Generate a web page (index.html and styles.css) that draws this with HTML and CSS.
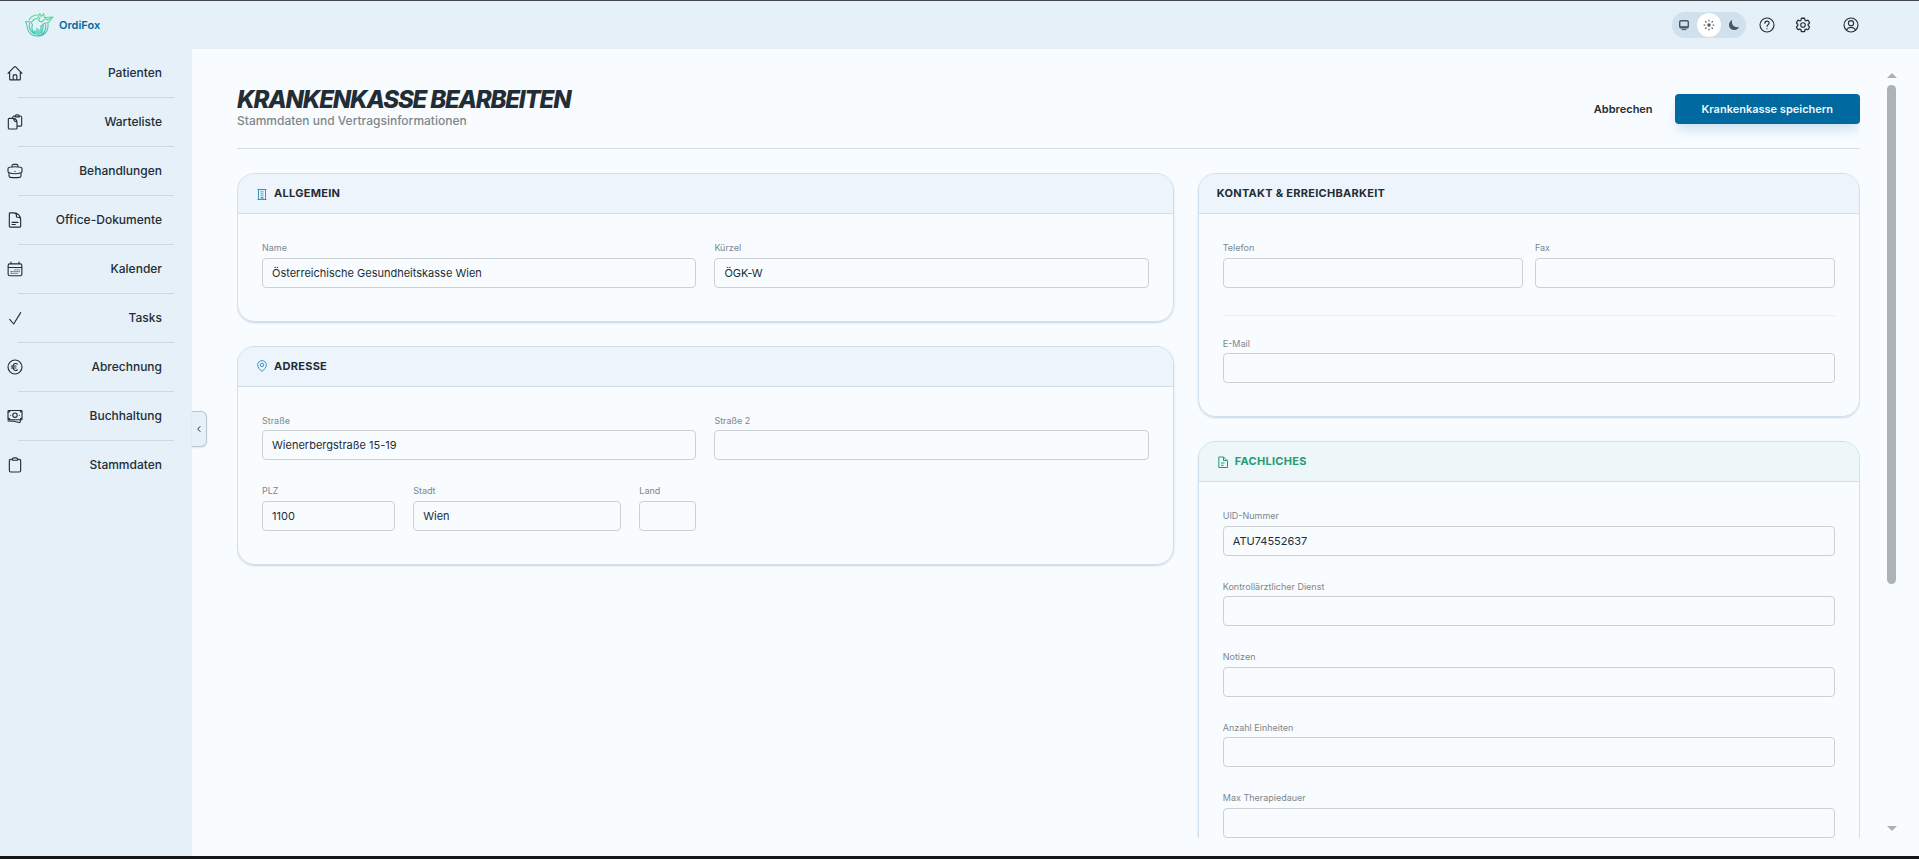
FILE: index.html
```html
<!DOCTYPE html>
<html lang="de">
<head>
<meta charset="utf-8">
<meta name="viewport" content="width=device-width, initial-scale=1">
<title>OrdiFox – Krankenkasse bearbeiten</title>
<link rel="stylesheet" href="styles.css">
</head>
<body>
<header class="topbar">
  <a class="brand" href="#">
    <svg class="brand-logo" viewBox="0 0 30 26" fill="none" stroke="url(#foxGradient)" stroke-width="1.1" stroke-linecap="round" stroke-linejoin="round" aria-hidden="true">
      <defs><linearGradient id="foxGradient" x1="0" y1="0" x2="0" y2="26" gradientUnits="userSpaceOnUse"><stop offset="0" stop-color="#5fe08f"/><stop offset="1" stop-color="#2fbfb4"/></linearGradient></defs>
      <path d="M1.500 9.500l5.500.500 1.500 3M1.500 9.500c1 2 1.500 3.500 1.800 6 .600 5 4.500 8.500 9.700 8.500 3 0 5-1 6.500-2.800"/>
      <path d="M5 8c1.500-3 5-5 9-5M5.500 11c-1 4 .500 8.500 4.500 10.500M8.500 13c-1.500 2.500-.500 6 2 8"/>
      <path d="M14 5.500l1.800-4 1.700 3 2.200-2.800.800 3.800 8.500-.500-4.500 5.500-4.500 1-2.500 2.500"/>
      <path d="M16 5.500l-1.500 3 3 1.500 3-2.500M20.500 5.500l3 2.500 4.500-2.500"/>
      <path d="M24 11.500c.500 4.500-1 8.500-4.500 11-1.500 1-3 1.500-4.500 1.500M21.500 12.500c.800 4-.500 7.500-4 10M19 13c.500 3-.500 6-2 8"/>
      <path d="M11 19v3M13 16.500v6M15 18v4.500M17 14v7" stroke-width="1.300"/>
      <path d="M8 9.500c1.500-2 3.500-3 5.500-3"/>
    </svg>
    <span>OrdiFox</span>
  </a>
  <div class="tools">
    <div class="theme" role="group" aria-label="Farbschema">
      <button class="theme-option" type="button" aria-label="System">
        <svg class="icon-small" viewBox="0 0 12 12" fill="none" stroke="currentColor" stroke-width="1.4" stroke-linejoin="round"><rect x="1.700" y="1.700" width="8.600" height="7" rx="1.300"/><path d="M2 8h8" stroke-width="1.600"/><path d="M4 10.600h4" stroke-linecap="round" stroke-width="1"/></svg>
      </button>
      <button class="theme-option theme-option-active" type="button" aria-label="Hell">
        <svg class="icon-small" viewBox="0 0 12 12" fill="currentColor" stroke="currentColor" stroke-width="1.100" stroke-linecap="round"><circle cx="6" cy="6" r="1.700" stroke="none"/><path d="M6 1v1M6 10v1M1 6h1M10 6h1M2.500 2.500l.600.600M8.900 8.900l.600.600M2.500 9.500l.600-.600M8.900 3.100l.600-.600"/></svg>
      </button>
      <button class="theme-option" type="button" aria-label="Dunkel">
        <svg class="icon-small" viewBox="0 0 12 12" fill="currentColor"><path d="M4.200 1.100A4.900 4.900 0 0 0 3.900 3c0 2.900 2.300 5.200 5.200 5.200.700 0 1.300-.100 1.900-.400A5.200 5.200 0 0 1 1 6c0-2.200 1.300-4.100 3.200-4.900z"/></svg>
      </button>
    </div>
    <button class="tool tool-help" type="button" aria-label="Hilfe">
      <svg class="icon" viewBox="0 0 24 24"><circle cx="12" cy="12" r="10.500"/><path d="M8.800 9.300c0-1.900 1.400-3.100 3.200-3.100s3.200 1.200 3.200 2.900c0 2.400-3.100 2.400-3.100 4.900M12 17.200v.300"/></svg>
    </button>
    <button class="tool tool-settings" type="button" aria-label="Einstellungen">
      <svg class="icon" viewBox="0 0 24 24"><path d="M9.600 3.900c.100-.500.600-.900 1.100-.900h2.600c.500 0 1 .400 1.100.900l.200 1.300c.100.400.300.700.600.900l.300.100c.300.200.700.200 1.100.100l1.200-.500c.500-.200 1.100 0 1.400.500l1.300 2.200c.300.500.200 1.100-.300 1.400l-1 .900c-.300.200-.400.600-.400 1v.300c0 .400.100.800.400 1l1 .900c.400.300.500.900.300 1.400l-1.300 2.200c-.300.500-.900.700-1.400.500l-1.200-.500c-.400-.100-.800-.100-1.100.100l-.300.100c-.300.200-.500.500-.600.900l-.200 1.300c-.100.500-.600.900-1.100.900h-2.600c-.500 0-1-.400-1.100-.900l-.200-1.300c-.100-.400-.300-.700-.600-.900l-.300-.100c-.300-.200-.700-.200-1.100-.100l-1.200.500c-.500.200-1.100 0-1.400-.500l-1.300-2.200c-.300-.500-.200-1.100.300-1.400l1-.900c.300-.200.400-.600.400-1v-.300c0-.400-.100-.800-.400-1l-1-.900c-.400-.300-.500-.900-.300-1.400l1.300-2.200c.300-.500.900-.700 1.400-.500l1.200.500c.400.100.800.100 1.100-.100l.300-.100c.300-.200.500-.500.600-.900z" transform="translate(-1.500 -1.500) scale(1.125)"/><circle cx="12" cy="12" r="3.400"/></svg>
    </button>
    <button class="tool tool-account" type="button" aria-label="Konto">
      <svg class="icon" viewBox="0 0 24 24"><circle cx="12" cy="12" r="10.500"/><circle cx="12" cy="9.300" r="3.900"/><path d="M5 19.300c1.500-2.400 4-3.800 7-3.800s5.500 1.400 7 3.800"/></svg>
    </button>
  </div>
</header>

<div class="shell">
  <nav class="sidebar" aria-label="Hauptmenü">
    <a class="nav-item" href="#"><svg class="icon" viewBox="0 0 24 24"><path d="M1.500 12.500L11 2.900c.600-.600 1.400-.600 2 0l9.500 9.600M4 10.200v11c0 .600.500 1.100 1.100 1.100h13.800c.600 0 1.100-.500 1.100-1.100v-11M9.300 22v-6c0-.600.500-1.100 1.100-1.100h3.200c.600 0 1.100.500 1.100 1.100v6"/></svg><span>Patienten</span></a>
    <a class="nav-item" href="#"><svg class="icon" viewBox="0 0 24 24"><path d="M8.500 6.500H3.300c-.700 0-1.300.600-1.300 1.300v13.400c0 .700.600 1.300 1.300 1.300h10.400c.700 0 1.300-.600 1.300-1.300v-4M8.500 6.500c4 0 6.500 3 6.500 6.500v5.200h5.700c.700 0 1.300-.600 1.300-1.300V5.200c0-1.100-.800-2-1.900-2.200l-1.600-.200M8.500 6.500V5.200c0-1.100.800-2 1.900-2.200l1.600-.200M8.500 6.500c1.500 0 2 1 2 2.300 0 1.300.700 2.200 2 2.200 1.500 0 2.500.800 2.500 2M12 4.300h6.500c0-2-1-3-2.200-3h-2.100c-1.200 0-2.200 1-2.200 3z"/></svg><span>Warteliste</span></a>
    <a class="nav-item" href="#"><svg class="icon" viewBox="0 0 24 24"><path d="M21 14.500v4.700c0 1.200-.800 2.200-2 2.300-4.600.600-9.400.600-14 0-1.200-.100-2-1.100-2-2.300v-4.700M21 14.500c.900-.500 1.500-1.300 1.500-2.300V8.700c0-1.200-.900-2.200-2-2.400a57 57 0 0 0-17 0c-1.100.200-2 1.200-2 2.400v3.500c0 1 .600 1.900 1.500 2.300 5.700 2 12.300 2 18 0M16.500 5.800V4.400c0-1.300-1-2.400-2.300-2.400H9.800C8.500 2 7.500 3.100 7.500 4.400v1.400M12 12.600v.100"/></svg><span>Behandlungen</span></a>
    <a class="nav-item" href="#"><svg class="icon" viewBox="0 0 24 24"><path d="M20.500 14v-2.500c0-2-1.600-3.600-3.600-3.600h-1.600c-.700 0-1.200-.500-1.200-1.200V5c0-2-1.600-3.600-3.600-3.600H8.300M7.500 15.500h9M7.500 18.800h5M10.500 1.400H4.700c-.700 0-1.200.500-1.200 1.200v18.800c0 .700.500 1.200 1.200 1.200h14.600c.700 0 1.200-.500 1.200-1.200V11.400c0-5.500-4.500-10-10-10z"/></svg><span>Office-Dokumente</span></a>
    <a class="nav-item" href="#"><svg class="icon" viewBox="0 0 24 24"><path d="M6 1.500v2.800M18 1.500v2.800M1.700 19.800V6.700c0-1.300 1.100-2.400 2.400-2.400h15.800c1.300 0 2.400 1.100 2.400 2.400v13.100c0 1.300-1.100 2.400-2.400 2.400H4.100c-1.300 0-2.400-1.100-2.400-2.400zM1.700 9.700h20.600M12 13.300h.100M12 16h.100M12 18.700h.100M9 16h.100M9 18.700h.100M6.200 16h.100M6.200 18.700h.100M15 13.300h.100M15 16h.100M15 18.700h.100M18 13.300h.100M18 16h.100"/></svg><span>Kalender</span></a>
    <a class="nav-item" href="#"><svg class="icon" viewBox="0 0 24 24"><path d="M4 14l6 7L20.500 4"/></svg><span>Tasks</span></a>
    <a class="nav-item" href="#"><svg class="icon" viewBox="0 0 24 24"><circle cx="12" cy="12" r="10.500"/><path d="M15.500 7.600c-2.200-1.600-4.800-.900-5.900 1.300-1 1.900-1 4.300 0 6.200 1.100 2.200 3.700 2.900 5.900 1.300M6.500 10.500h7M6.500 13.500h7"/></svg><span>Abrechnung</span></a>
    <a class="nav-item" href="#"><svg class="icon" viewBox="0 0 24 24"><path d="M1.500 19.500c6 0 11.500.800 16.800 2.200.800.200 1.600-.400 1.600-1.200v-1.800M2.500 3.800h19c.600 0 1 .400 1 1v11.900c0 .600-.400 1-1 1h-19c-.600 0-1-.400-1-1V4.800c0-.600.400-1 1-1zM1.500 6.500c1.600 0 2.700-1 2.700-2.700M22.500 6.500c-1.600 0-2.700-1-2.700-2.700M1.500 15c1.600 0 2.700 1 2.700 2.700M22.500 15c-1.600 0-2.700 1-2.700 2.700M18.500 10.800h.100M5.500 10.800h.100"/><circle cx="12" cy="10.800" r="3.300"/></svg><span>Buchhaltung</span></a>
    <a class="nav-item" href="#"><svg class="icon" viewBox="0 0 24 24"><path d="M16 3.300c1 .100 2 .100 2.600.200 1.100.100 1.900 1 1.900 2.200v14.500c0 1.300-1 2.300-2.300 2.300H5.800c-1.300 0-2.300-1-2.300-2.300V5.700c0-1.200.800-2.100 1.900-2.200.600-.100 1.600-.100 2.600-.200M8 4.800h8c0-2.300-1-3.500-2.500-3.500h-3C9 1.300 8 2.500 8 4.800z"/></svg><span>Stammdaten</span></a>
    <button class="collapse" type="button" aria-label="Menü einklappen"><svg class="icon-chevron" viewBox="0 0 8 8" fill="none" stroke="currentColor" stroke-width="1"><path d="M5.300 1.300L2.700 4l2.600 2.700"/></svg></button>
  </nav>

  <main class="main">
    <div class="scroll-view">
      <div class="page-head">
        <div>
          <h1 class="page-title">Krankenkasse bearbeiten</h1>
          <p class="page-subtitle">Stammdaten und Vertragsinformationen</p>
        </div>
        <div class="actions">
          <button class="button button-plain" type="button">Abbrechen</button>
          <button class="button button-primary" type="submit" form="insurer">Krankenkasse speichern</button>
        </div>
      </div>

      <form class="columns" id="insurer">
        <div class="column column-wide">
          <section class="card">
            <h2 class="card-head"><svg class="card-icon" viewBox="0 0 12 12" fill="none" stroke="currentColor"><path d="M2.500 11.500v-10h7v10M1.500 1.500h9M1.500 11.500h9M5 11.500v-2h2v2"/><path d="M4.500 3.500h3M4.500 5.500h3M4.500 7.500h3" stroke-width="1.300" stroke-opacity=".6"/></svg>Allgemein</h2>
            <div class="card-body grid-two">
              <div class="field"><label for="name">Name</label><input id="name" type="text" value="Österreichische Gesundheitskasse Wien"></div>
              <div class="field"><label for="short">Kürzel</label><input id="short" type="text" value="ÖGK-W"></div>
            </div>
          </section>
          <section class="card">
            <h2 class="card-head"><svg class="card-icon" viewBox="0 0 12 12" fill="none" stroke="currentColor"><path d="M6 11.300C3.500 9.500 1.700 7.500 1.700 4.900a4.300 4.300 0 0 1 8.600 0c0 2.600-1.800 4.600-4.300 6.400z"/><circle cx="6" cy="4.900" r="1.700"/></svg>Adresse</h2>
            <div class="card-body grid-two">
              <div class="field"><label for="street">Straße</label><input id="street" type="text" value="Wienerbergstraße 15-19"></div>
              <div class="field"><label for="street2">Straße 2</label><input id="street2" type="text"></div>
              <div class="grid-city">
                <div class="field"><label for="zip">PLZ</label><input id="zip" type="text" value="1100"></div>
                <div class="field"><label for="city">Stadt</label><input id="city" type="text" value="Wien"></div>
                <div class="field"><label for="country">Land</label><input id="country" type="text"></div>
              </div>
            </div>
          </section>
        </div>

        <div class="column column-narrow">
          <section class="card">
            <h2 class="card-head">Kontakt &amp; Erreichbarkeit</h2>
            <div class="card-body">
              <div class="grid-phone">
                <div class="field"><label for="phone">Telefon</label><input id="phone" type="tel"></div>
                <div class="field"><label for="fax">Fax</label><input id="fax" type="tel"></div>
              </div>
              <hr class="separator">
              <div class="field"><label for="mail">E-Mail</label><input id="mail" type="email"></div>
            </div>
          </section>
          <section class="card">
            <h2 class="card-head card-head-green"><svg class="card-icon" viewBox="0 0 12 12" fill="none" stroke="currentColor"><path d="M6.500 1H1.800v10.500h8.700V5zM6.500 1v3.500h4M4 7h3.500M4 9.300h2.500"/></svg>Fachliches</h2>
            <div class="card-body stack">
              <div class="field"><label for="uid">UID-Nummer</label><input id="uid" type="text" value="ATU74552637"></div>
              <div class="field"><label for="service">Kontrollärztlicher Dienst</label><input id="service" type="text"></div>
              <div class="field"><label for="notes">Notizen</label><input id="notes" type="text"></div>
              <div class="field"><label for="units">Anzahl Einheiten</label><input id="units" type="text"></div>
              <div class="field"><label for="duration">Max Therapiedauer</label><input id="duration" type="text"></div>
            </div>
          </section>
        </div>
      </form>
    </div>
    <div class="scrollbar" aria-hidden="true">
      <span class="arrow arrow-up"></span>
      <span class="track"><span class="thumb"></span></span>
      <span class="arrow arrow-down"></span>
    </div>
  </main>
</div>
</body>
</html>
```
FILE: styles.css
```css
:root {
  --bar: #e5f0f9;
  --surface: #f8fcff;
  --ink: #232d36;
  --muted: #80868b;
  --line: #d0dfeb;
  --field-line: #ccd1d5;
  --primary: #00699f;
  --green: #1f9d70;
}

* { box-sizing: border-box; }

body {
  margin: 0;
  height: 100vh;
  display: flex;
  flex-direction: column;
  overflow: hidden;
  border-top: 1px solid #43454b;
  border-bottom: 3px solid #141618;
  background: var(--surface);
  color: var(--ink);
  font: 12px/1.5 Inter, "Liberation Sans", sans-serif;
}

button, input { font: inherit; color: inherit; }
button { padding: 0; border: 0; background: none; }
a { color: inherit; text-decoration: none; }
svg { display: block; flex: none; }

.icon {
  width: 16px;
  height: 16px;
  fill: none;
  stroke: currentColor;
  stroke-width: 1.7;
  stroke-linecap: round;
  stroke-linejoin: round;
}
.icon-small { width: 12px; height: 12px; }
.icon-chevron { width: 8px; height: 8px; }

/* Top bar */
.topbar {
  flex: none;
  display: flex;
  align-items: center;
  justify-content: space-between;
  height: 48px;
  padding: 0 60px 0 24px;
  background: var(--bar);
}
.brand {
  display: flex;
  align-items: center;
  gap: 5px;
  color: var(--primary);
  font-size: 11px;
  font-weight: 600;
}
.brand-logo { width: 30px; height: 26px; }
.tools { display: flex; align-items: center; }
.theme {
  display: flex;
  gap: 1px;
  padding: 1px 0;
  border-radius: 13px;
  background: #d0e0ec;
  color: #4a5660;
}
.theme-option {
  display: grid;
  place-items: center;
  width: 24px;
  height: 24px;
  border-radius: 50%;
}
.theme-option-active { background: #fff; }
.tool { margin-left: 20px; }
.tool-help { margin-left: 13px; }
.tool-account { margin-left: 32px; }

/* Sidebar */
.shell { flex: 1; display: flex; min-height: 0; }
.sidebar {
  position: relative;
  flex: none;
  width: 192px;
  background: var(--bar);
}
.nav-item {
  display: flex;
  align-items: center;
  justify-content: space-between;
  height: 49px;
  padding: 0 30px 2px 7px;
  font-weight: 500;
  background: linear-gradient(#ccd8e3, #ccd8e3) 18px 100% / 156px 1px no-repeat;
}
.nav-item:last-of-type { background: none; }
.collapse {
  position: absolute;
  left: 100%;
  top: calc(50% - 42px);
  display: grid;
  place-items: center;
  width: 15px;
  height: 36px;
  border: 1px solid #bac5ce;
  border-left: 0;
  border-radius: 0 6px 6px 0;
  background: var(--bar);
  box-shadow: 0 1px 2px rgb(0 0 0 / 10%);
}

/* Page */
.main {
  flex: 1;
  display: flex;
  gap: 27px;
  min-width: 0;
  padding: 18px 23px 18px 45px;
}
.scroll-view { flex: 1; min-width: 0; overflow: hidden; }
.page-head {
  display: flex;
  align-items: center;
  justify-content: space-between;
  padding: 21px 0 18px;
  border-bottom: 1px solid var(--line);
}
.page-title {
  margin: 0;
  font-size: 24px;
  font-weight: 800;
  font-style: italic;
  line-height: 24px;
  letter-spacing: -0.05em;
  text-transform: uppercase;
}
.page-subtitle { margin: 0; color: var(--muted); font-weight: 500; }
.actions { display: flex; align-items: center; gap: 22px; }
.button {
  height: 30px;
  border-radius: 4px;
  font-size: 11px;
  font-weight: 600;
}
.button-primary {
  padding: 0 27px;
  background: var(--primary);
  color: #eef7fd;
  box-shadow: 0 8px 12px -2px #cfe2f0;
}

.columns {
  display: grid;
  grid-template-columns: repeat(12, minmax(0, 1fr));
  gap: 24px;
  align-items: start;
  padding-top: 24px;
}
.column { display: flex; flex-direction: column; gap: 24px; }
.column-wide { grid-column: span 7; }
.column-narrow { grid-column: span 5; }

.card {
  overflow: hidden;
  border: 1px solid var(--line);
  border-radius: 18px;
  box-shadow: 0 1px 2px #c6d5e2;
}
.card-head {
  display: flex;
  align-items: center;
  gap: 6px;
  height: 40px;
  margin: 0;
  padding: 0 18px;
  border-bottom: 1px solid var(--line);
  background: #edf4fc;
  font-size: 11px;
  font-weight: 700;
  letter-spacing: 0.025em;
  text-transform: uppercase;
}
.card-icon { width: 12px; height: 12px; color: #3b93bf; }
.card-head-green { background: #edf6f8; color: var(--green); }
.card-head-green .card-icon { color: var(--green); }

.card-body { padding: 27px 24px 33px; }
.grid-two, .grid-city, .grid-phone, .stack { display: grid; }
.grid-two { grid-template-columns: 1fr 1fr; gap: 24px 18px; }
.grid-city { grid-template-columns: 133fr 208fr 57fr; gap: 18px; }
.grid-phone { grid-template-columns: 1fr 1fr; gap: 12px; }
.stack { gap: 24px; }
.separator {
  margin: 27px 0 21px;
  border: 0;
  border-top: 1px solid #e3edf5;
}

.field { display: flex; flex-direction: column; gap: 3px; min-width: 0; }
.field label { color: var(--muted); font-size: 9px; }
.field input {
  width: 100%;
  height: 30px;
  padding: 0 9px;
  border: 1px solid var(--field-line);
  border-radius: 4px;
  background: transparent;
  font-size: 11px;
}

/* Scrollbar beside the form */
.scrollbar {
  flex: none;
  display: flex;
  flex-direction: column;
  justify-content: space-between;
  width: 9px;
  padding: 6px 0 7px;
}
.arrow { border: solid transparent; border-width: 0 5px; }
.arrow-up { border-bottom: 5px solid #adb2b6; }
.arrow-down { border-top: 5px solid #adb2b6; }
.track { flex: 1; padding: 7px 0; }
.thumb {
  display: block;
  height: 68%;
  border-radius: 5px;
  background: #adb2b6;
}
```
